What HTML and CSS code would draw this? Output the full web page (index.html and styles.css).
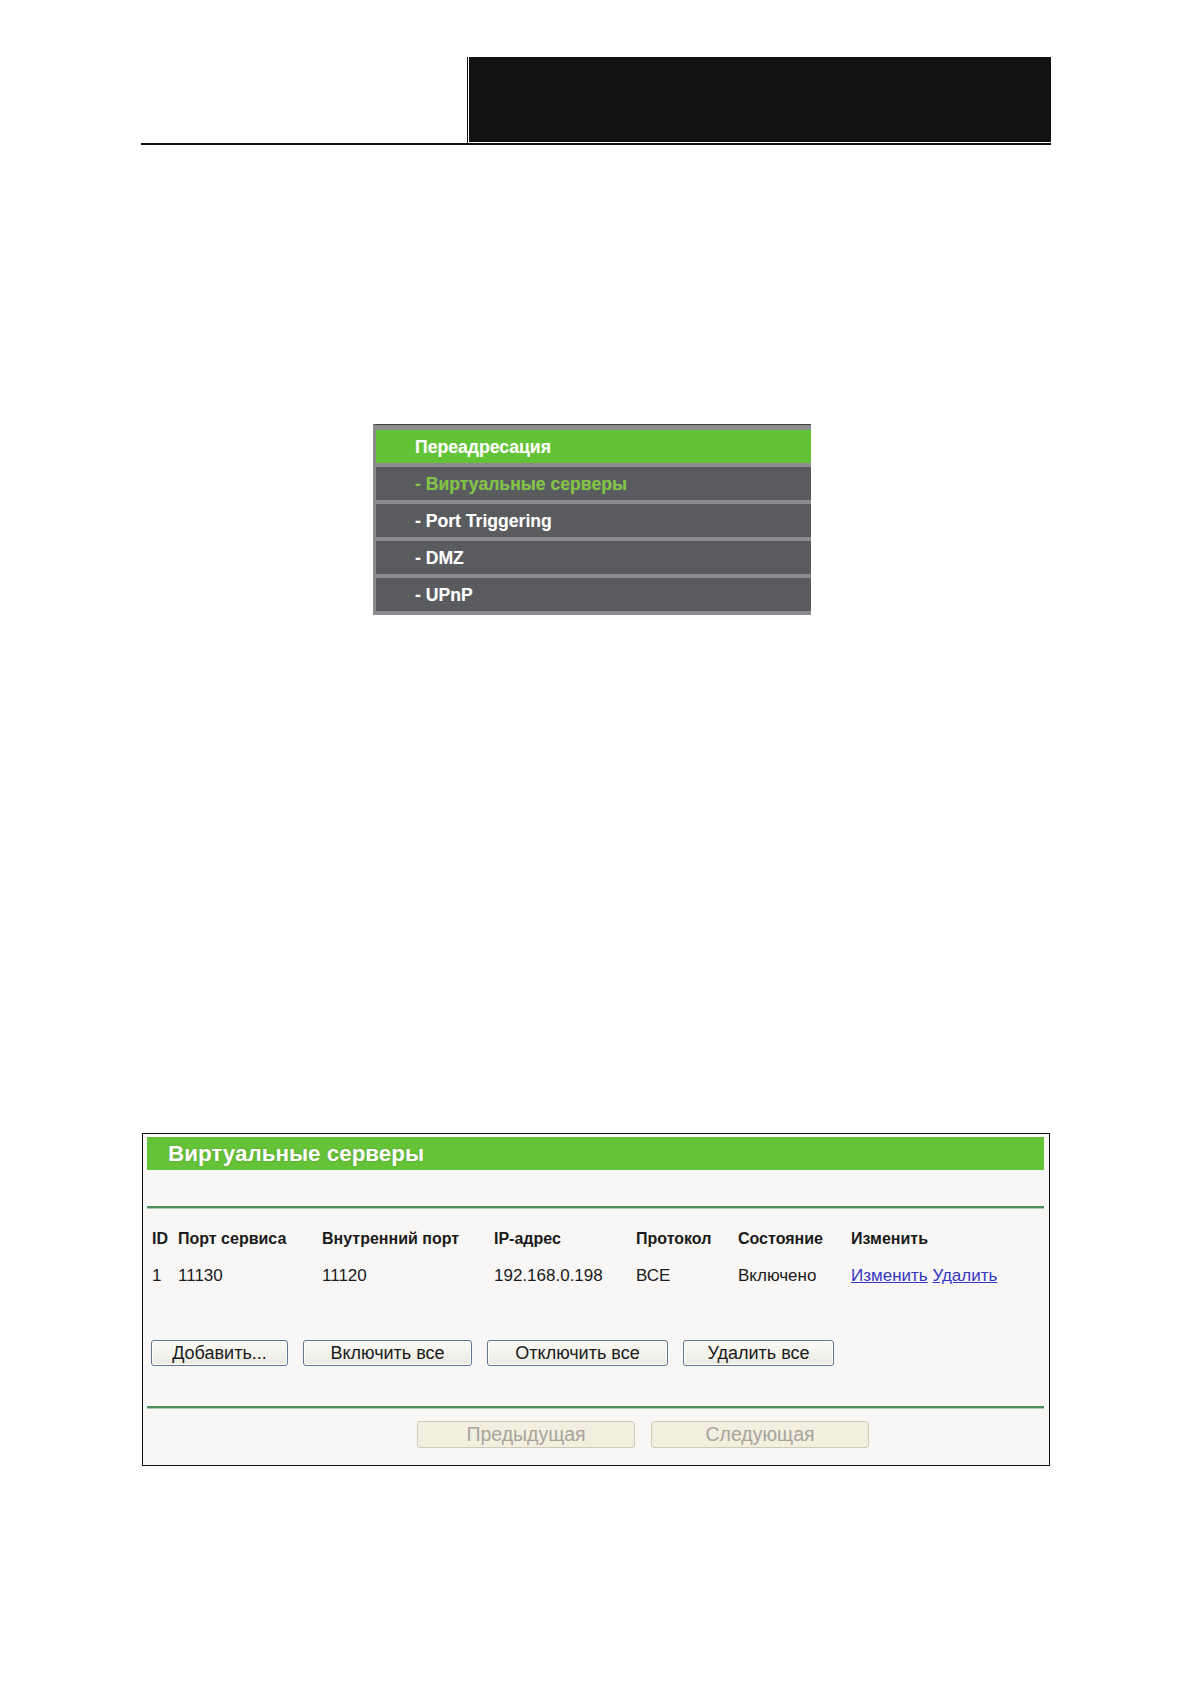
FILE: index.html
```html
<!DOCTYPE html>
<html lang="ru">
<head>
<meta charset="utf-8">
<title>Виртуальные серверы</title>
<link rel="stylesheet" href="styles.css">
</head>
<body>
<div class="page">
  <header class="doc-header">
    <div class="doc-header-spacer"></div>
    <div class="doc-header-brand"></div>
  </header>

  <nav class="menu">
    <div class="menu-item menu-head">Переадресация</div>
    <div class="menu-item menu-active">- Виртуальные серверы</div>
    <div class="menu-item">- Port Triggering</div>
    <div class="menu-item">- DMZ</div>
    <div class="menu-item">- UPnP</div>
  </nav>

  <section class="panel">
    <div class="panel-title">Виртуальные серверы</div>
    <div class="panel-rule rule-top"></div>
    <div class="vs-table">
      <div class="vs-row vs-head">
        <span>ID</span><span>Порт сервиса</span><span>Внутренний порт</span><span>IP-адрес</span><span>Протокол</span><span>Состояние</span><span>Изменить</span>
      </div>
      <div class="vs-row">
        <span>1</span><span>11130</span><span>11120</span><span>192.168.0.198</span><span>ВСЕ</span><span>Включено</span><span class="links"><a href="#">Изменить</a> <a href="#">Удалить</a></span>
      </div>
    </div>
    <div class="actions">
      <button class="btn btn-add">Добавить...</button>
      <button class="btn btn-enable">Включить все</button>
      <button class="btn btn-disable">Отключить все</button>
      <button class="btn btn-delete">Удалить все</button>
    </div>
    <div class="panel-rule rule-bottom"></div>
    <div class="pager">
      <button class="btn btn-page" disabled>Предыдущая</button>
      <button class="btn btn-page" disabled>Следующая</button>
    </div>
  </section>
</div>
</body>
</html>
```

FILE: styles.css
```css
html, body {
  margin: 0;
  padding: 0;
  background: #ffffff;
}

body {
  font-family: "Liberation Sans", Arial, sans-serif;
  color: #1a1a1a;
}

.page {
  width: 910px;
  margin-left: 141px;
  padding-top: 57px;
}

/* ---------- document header ---------- */
.doc-header {
  display: flex;
  height: 86px;
  border-bottom: 2px solid #111;
}

.doc-header-spacer {
  width: 326px;
}

.doc-header-brand {
  flex: 1;
  background: #12110f;
  border-left: 1px solid #12110f;
  box-shadow: inset 1px -1px 0 #ffffff;
}

/* ---------- menu ---------- */
.menu {
  margin: 279px 0 0 232px;
  width: 435px;
  border-top: 1px solid #3f3f40;
  border-left: 3px solid #8c8c8c;
  padding-top: 5px;
  background: #8c8d8f;
}

.menu-item {
  height: 33px;
  line-height: 34px;
  border-bottom: 4px solid #8c8d8f;
  background: #5a5b5f;
  color: #ffffff;
  font-size: 17.6px;
  font-weight: bold;
  padding-left: 39px;
  text-shadow: 0 0 1px rgba(255, 255, 255, 0.25);
}

.menu-head {
  background: #63c337;
}

.menu-active {
  color: #80c441;
}

/* ---------- panel ---------- */
.panel {
  margin: 518px 0 0 1px;
  width: 897px;
  border: 1px solid #111;
  background: #f8f7f5;
  padding: 3px 5px 0 4px;
}

.panel-title {
  height: 33px;
  line-height: 34px;
  background: #64c337;
  color: #ffffff;
  font-size: 22.4px;
  font-weight: bold;
  padding-left: 21px;
  text-shadow: 0 0 2px rgba(90, 120, 60, 0.6);
}

.panel-rule {
  height: 0;
  border-top: 2px solid #4d8f5e;
  box-shadow: 0 1px 0 #a8cdb0;
}

.rule-top {
  margin-top: 36px;
}

.vs-table {
  margin-top: 12px;
  padding-left: 5px;
}

.vs-row {
  display: grid;
  grid-template-columns: 26px 144px 172px 142px 102px 113px auto;
  height: 37px;
  line-height: 37px;
  font-size: 17px;
  color: #1a1a1a;
}

.vs-head {
  font-size: 16px;
  font-weight: bold;
}

.links a {
  color: #3535c0;
  text-decoration: underline;
}

.actions {
  display: flex;
  gap: 15px;
  margin-top: 46px;
  padding-left: 4px;
}

.btn {
  height: 26px;
  font-family: "Liberation Sans", Arial, sans-serif;
  font-size: 18px;
  color: #1a1a1a;
  background: linear-gradient(#fbfaf5, #ecebe2);
  border: 1px solid #5f7896;
  border-radius: 3px;
  padding: 0;
  box-shadow: inset 0 0 0 1px #fefefc;
}

.btn-add { width: 137px; }
.btn-enable { width: 169px; }
.btn-disable { width: 181px; }
.btn-delete { width: 151px; }

.rule-bottom {
  margin-top: 40px;
}

.pager {
  display: flex;
  gap: 16px;
  margin-top: 13px;
  padding-left: 270px;
  padding-bottom: 17px;
}

.btn-page {
  width: 218px;
  height: 27px;
  font-size: 19.5px;
  color: #a8a39b;
  background: #f2efe0;
  border: 1px solid #cfcbb7;
  box-shadow: none;
}
```
